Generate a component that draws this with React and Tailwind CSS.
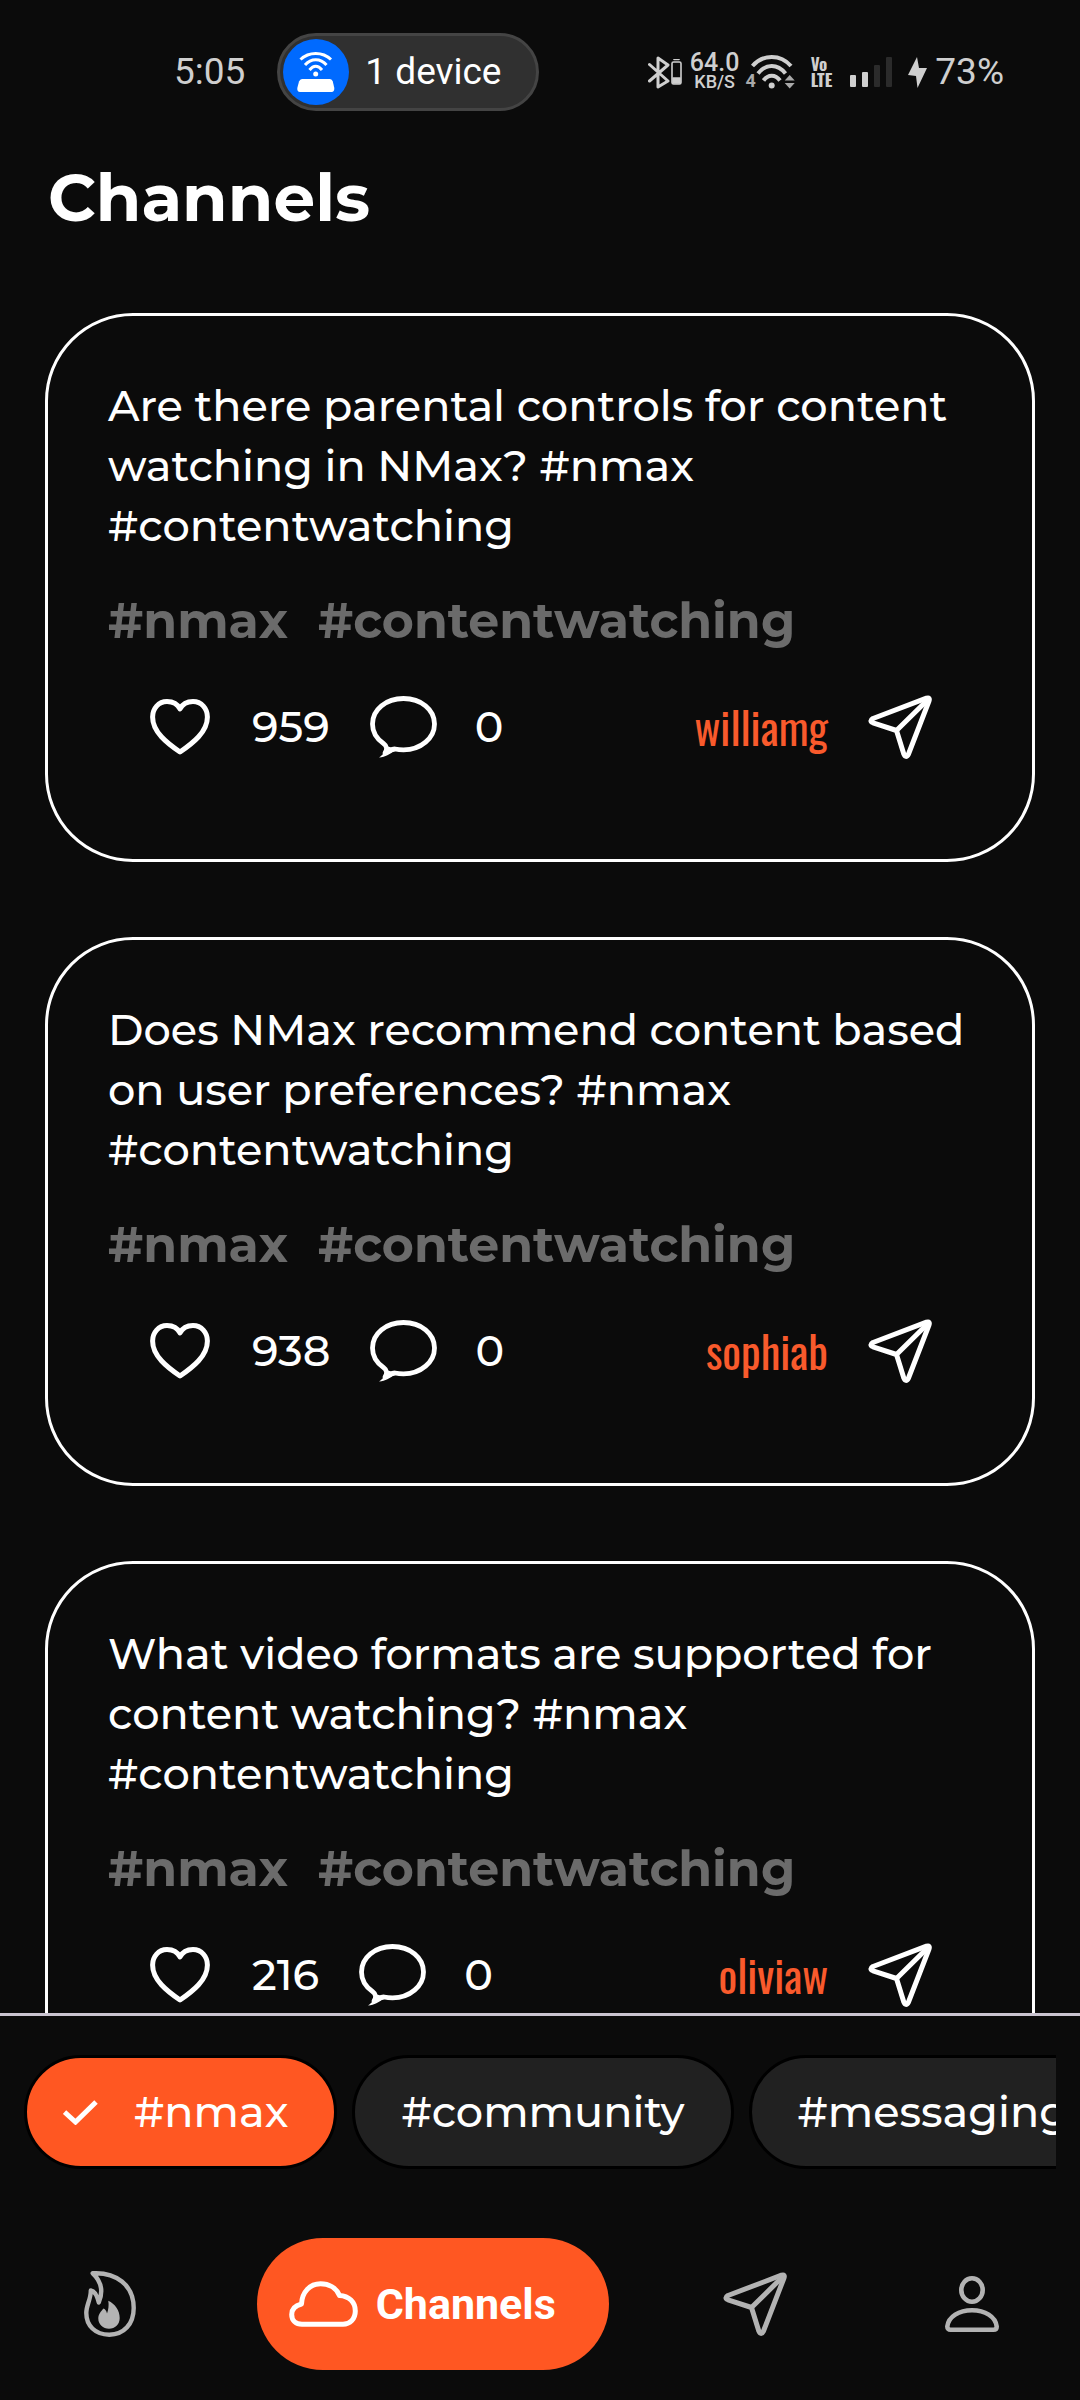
const posts = [
  {
    id: 1,
    text: "Are there parental controls for content watching in NMax? #nmax #contentwatching",
    likes: 959,
    comments: 0,
    user: "williamg",
  },
  {
    id: 2,
    text: "Does NMax recommend content based on user preferences? #nmax #contentwatching",
    likes: 938,
    comments: 0,
    user: "sophiab",
  },
  {
    id: 3,
    text: "What video formats are supported for content watching? #nmax #contentwatching",
    likes: 216,
    comments: 0,
    user: "oliviaw",
  },
];

const tags = ["#nmax", "#contentwatching"];

const chips = [
  { label: "#nmax", selected: true },
  { label: "#community", selected: false },
  { label: "#messaging", selected: false },
];

function Icon({ w, h, className = "", children, stroke = 5 }) {
  return (
    <svg
      width={w}
      height={h}
      viewBox={`0 0 ${w} ${h}`}
      fill="none"
      stroke="currentColor"
      strokeWidth={stroke}
      strokeLinecap="round"
      strokeLinejoin="round"
      aria-hidden="true"
      className={`shrink-0 ${className}`}
    >
      {children}
    </svg>
  );
}

const Heart = () => (
  <Icon w={60} h={56}>
    <path d="M30 10C27.5 5 22.500 2.600 17 2.600C8.500 2.600 2.600 9.500 2.600 18C2.600 33 17 44 30 53C43 44 57.400 33 57.400 18C57.400 9.500 51.500 2.600 43 2.600C37.500 2.600 32.500 5 30 10Z" />
  </Icon>
);

const Bubble = () => (
  <Icon w={67} h={62} stroke={4.8}>
    <path d="M25 53C28 53.600 31 53.800 33.500 53.800C51 53.800 64.500 42 64.500 28C64.500 13.500 51 2.500 33.500 2.500C16 2.500 2.500 13.500 2.500 28C2.500 36 7 43 13.500 47.500C17 50 17.500 53.500 15 57C18 55.500 21 53 25 53Z" />
    <path d="M14 50C17 54 14 58 9 61.500C16 61 19 58 25 55L20 51Z" fill="currentColor" stroke="none" />
  </Icon>
);

const Plane = ({ className }) => (
  <Icon w={64} h={64} className={className} stroke={5}>
    <path d="M58.500 3.200L5 23.500Q0.800 26 5 27.800L28.500 35.500L35.800 59Q38 63.800 40.500 59L61 6Q62.300 2 58.500 3.200Z" />
    <path d="M28.500 35.500L60 4.500" />
  </Icon>
);

const Cloud = () => (
  <Icon w={69} h={46} stroke={5}>
    <path d="M13 43.300H54C61 43.300 66.300 38 66.300 30C66.300 21 60 15 50.500 14.500C47.500 7 40 2.700 31.500 2.700C21 2.700 13 11 12.500 23C6.500 24.500 2.700 28 2.700 33.500C2.700 39.500 7 43.300 13 43.300Z" />
  </Icon>
);

const Flame = () => (
  <Icon w={52} h={66} stroke={4.4}>
    <path d="M8.700 2.300C32 1 49.700 14 49.700 37C49.700 53 40 63.700 25.300 63.700C11 63.700 2.300 54.500 2.300 42C2.300 34 7 28 6.800 19.500C10.500 20 13 24 14.800 31.500C19.500 20 17 10 8.700 2.300Z" />
    <path
      d="M24.300 29.700C31 33 35.700 39 35.700 47C35.700 53.500 31 57.700 25 57.700C19 57.700 14.300 53.500 14.300 47.500C14.300 43 17 40.500 19.500 37.500C21.500 38.500 22.500 40 23 42.500C24.500 38.500 25 34 24.300 29.700Z"
      fill="currentColor"
      stroke="none"
    />
  </Icon>
);

const Person = () => (
  <Icon w={54} h={56} stroke={4.6}>
    <ellipse cx="27" cy="14" rx="10.700" ry="11.700" />
    <path d="M5.500 53.700C3.500 53.700 2.300 52.500 2.300 50.500C3.500 40.500 14 34.300 27 34.300C40 34.300 50.500 40.500 51.700 50.500C51.700 52.500 50.500 53.700 48.500 53.700Z" />
  </Icon>
);

function StatusBar() {
  return (
    <header className="flex h-36 shrink-0 items-center justify-between pr-[76px] pl-[174px] font-['Roboto',sans-serif] text-[#cfcfcf]">
      <div className="flex items-center gap-8">
        <time className="text-[37px]">5:05</time>
        <div className="flex h-[78px] items-center gap-4 rounded-full border-3 border-[#444] bg-[#303030] pr-[34px] pl-[3px] text-white">
          <span className="flex size-[66px] items-center justify-center rounded-full bg-[#006aff]">
            <Icon w={38} h={40} stroke={3}>
              <path d="M3.500 7.500C12-.5 25.500-.5 34 7.500M8 13C14 6 23.500 6 29.500 13M12.500 18C16.500 13 21 13 25 18" strokeLinecap="butt" />
              <circle cx="18.700" cy="22" r="2.500" fill="currentColor" stroke="none" />
              <path
                d="M5 27H33Q35 27 35.800 29.500L37.300 36Q37.500 40 34.500 40H3Q0 40 .3 36L2 29.500Q3 27 5 27Z"
                fill="currentColor"
                stroke="none"
              />
            </Icon>
          </span>
          <span className="text-[37px]">1 device</span>
        </div>
      </div>

      <div className="flex items-center">
        <Icon w={22} h={33} stroke={3}>
          <path d="M1.500 8.500L20 25L10 31V2L20 9L1.500 25" />
        </Icon>
        <Icon w={11} h={26} stroke={1.6} className="ml-px">
          <rect x="1" y="3" width="9" height="22" rx="1.500" />
          <path d="M3 .5H8M2 19H9V24H2Z" fill="currentColor" />
        </Icon>
        <div className="ml-2 flex flex-col items-center font-medium">
          <span className="text-[25px] leading-5">64.0</span>
          <span className="text-[18px] leading-[18px]">KB/S</span>
        </div>
        <div className="ml-1.5 flex items-end text-[#a9a9a9]">
          <span className="-mr-[7px] text-[18px] leading-4 font-bold">4</span>
          <Icon w={46} h={34} stroke={4} className="text-[#cfcfcf]">
            <path
              d="M3.500 11C14-1 31.500-1 42 11M9 18.500C17 8.500 28.500 8.500 36.500 18.500M14.500 25.500C19 19 26.500 19 31 25.500"
              strokeLinecap="butt"
            />
            <circle cx="22.700" cy="30.500" r="3" fill="currentColor" stroke="none" />
            <path d="M40.700 20L45.700 25.500H35.700ZM35.700 28H45.700L40.700 33.500Z" fill="#a9a9a9" stroke="none" />
          </Icon>
        </div>
        <div className="ml-4 flex flex-col font-['Oswald','Roboto_Condensed',sans-serif] text-[17px] leading-4 font-bold">
          <span>Vo</span>
          <span>LTE</span>
        </div>
        <div className="ml-[18px] flex items-end gap-1.5">
          <i className="h-3 w-1.5 rounded-[1px] bg-current" />
          <i className="h-[15px] w-1.5 rounded-[1px] bg-current" />
          <i className="h-[22px] w-1.5 rounded-[1px] bg-[#2b2b2b]" />
          <i className="h-[30px] w-1.5 rounded-[1px] bg-[#2b2b2b]" />
        </div>
        <Icon w={19} h={31} className="ml-4">
          <path d="M9 0L0 18L8 19L9.500 31L19 11H11Z" fill="currentColor" stroke="none" />
        </Icon>
        <span className="ml-2 text-[37px]">73%</span>
      </div>
    </header>
  );
}

function PostCard({ post }) {
  return (
    <article className="rounded-[88px] border-3 border-white px-[60px] pt-[60px] pb-24">
      <p className="text-[43px] leading-[60px] font-medium">{post.text}</p>
      <div className="mt-[35px] flex flex-wrap gap-[30px] text-[49px] leading-[60px] font-bold text-[#6b6b6b]">
        {tags.map((t) => (
          <a key={t} href="#tag">
            {t}
          </a>
        ))}
      </div>
      <div className="mt-10 flex h-[72px] items-center pr-10 pl-[42px] text-[43px] font-medium">
        <button type="button" aria-label="Like" className="flex items-center gap-[42px]">
          <Heart />
          {post.likes}
        </button>
        <button type="button" aria-label="Comments" className="ml-10 flex items-center gap-[38px]">
          <Bubble />
          {post.comments}
        </button>
        <a href="#user" className="ml-auto font-['Oswald','Roboto_Condensed',sans-serif] text-[44px] font-normal text-[#f95a2c]">
          {post.user}
        </a>
        <button type="button" aria-label="Share" className="ml-10">
          <Plane />
        </button>
      </div>
    </article>
  );
}

export default function App() {
  return (
    <div className="flex h-screen flex-col overflow-hidden bg-[#0b0b0b] font-['Montserrat','Inter',sans-serif] text-white">
      <StatusBar />
      <main className="flex min-h-0 flex-1 flex-col">
        <h1 className="mt-3.5 shrink-0 px-12 text-[66px] leading-20 font-bold">Channels</h1>
        <section className="mt-[75px] flex min-h-0 flex-1 flex-col gap-[75px] overflow-hidden px-[45px] *:shrink-0">
          {posts.map((p) => (
            <PostCard key={p.id} post={p} />
          ))}
        </section>
      </main>

      <footer className="shrink-0 border-t-3 border-[#cac4d0] pt-[39px] pb-[30px]">
        <div className="mx-6 flex gap-[15px] overflow-hidden">
          {chips.map((c) => (
            <button
              key={c.label}
              type="button"
              aria-pressed={c.selected}
              className={`flex h-[114px] shrink-0 items-center gap-9 rounded-full border-3 border-black pr-[46px] text-[43px] font-medium ${
                c.selected ? "bg-[#ff5722] pl-9" : "bg-[#212121] pl-[46px]"
              }`}
            >
              {c.selected && (
                <Icon w={35} h={25}>
                  <path d="M1.500 12L12.500 22L33 2" strokeLinecap="butt" strokeLinejoin="miter" />
                </Icon>
              )}
              {c.label}
            </button>
          ))}
        </div>
        <nav className="mt-[69px] flex items-center pl-0.5 text-[#b3b3b3]">
          <a href="#trending" aria-label="Trending" className="flex flex-1 justify-center">
            <Flame />
          </a>
          <a
            href="#channels"
            aria-current="page"
            className="mx-[38px] flex h-33 w-[352px] items-center gap-[18px] rounded-full bg-[#ff5722] pl-8 font-['Roboto',sans-serif] text-[43px] font-bold text-white"
          >
            <Cloud />
            Channels
          </a>
          <a href="#messages" aria-label="Messages" className="flex flex-1 justify-center">
            <Plane />
          </a>
          <a href="#profile" aria-label="Profile" className="flex flex-1 justify-center">
            <Person />
          </a>
        </nav>
      </footer>
    </div>
  );
}
